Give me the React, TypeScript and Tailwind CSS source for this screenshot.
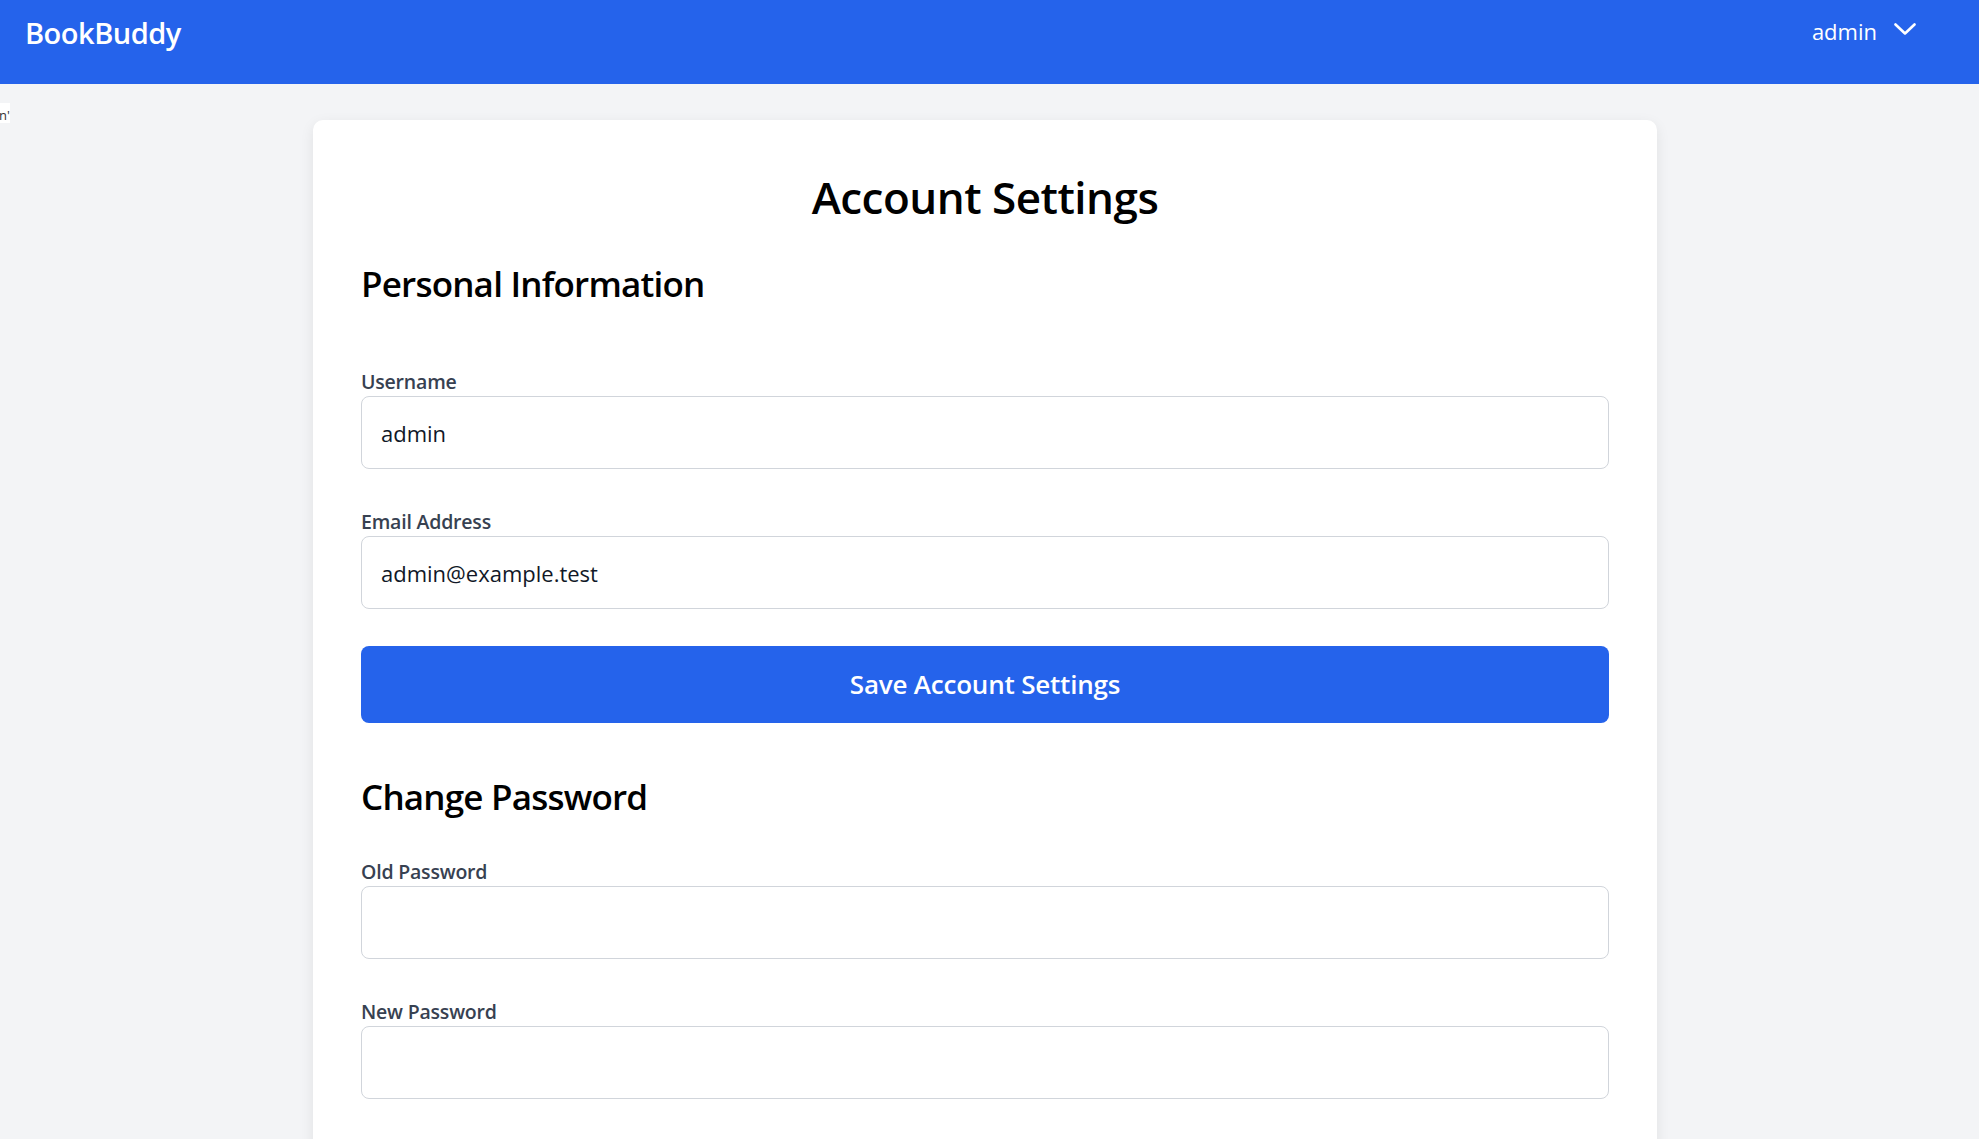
import React from "react";

const Field = ({ label, value, type = "text", gap }: { label: string; value?: string; type?: string; gap: string }) => (
  <div className={`flex flex-col ${gap}`}>
    <label className="text-[19.5px] leading-[28px] font-semibold text-[#374151] tracking-[-0.2px]">{label}</label>
    <input
      type={type}
      defaultValue={value}
      className="h-[73px] w-full rounded-[8px] border border-[#d1d5db] bg-white px-[19px] text-[22px] leading-[30px] text-[#111827] outline-none"
    />
  </div>
);

export default function App(): React.JSX.Element {
  return (
    <div className="min-h-screen bg-[#f3f4f6] font-['Open_Sans',sans-serif]">
      {/* Top bar */}
      <header className="h-[84px] bg-[#2563eb] flex justify-between items-start px-[25px]">
        <h1 className="mt-[13px] text-[29px] leading-[40px] font-semibold text-white tracking-[-0.5px]">BookBuddy</h1>
        <button className="mt-[16px] mr-[38px] flex items-center gap-[17px] text-white">
          <span className="text-[22px] leading-[30px]">admin</span>
          <svg width="22" height="12" viewBox="0 0 22 12" fill="none" className="mt-[-4px]">
            <polyline points="1.5,1.5 11,10.5 20.5,1.5" stroke="white" strokeWidth="2.6" strokeLinecap="round" strokeLinejoin="round" />
          </svg>
        </button>
      </header>

      <main className="flex items-start pt-[19px]">
        {/* broken image remnant */}
        <div className="w-[10px] h-[20px] bg-white overflow-hidden text-[13px] leading-[20px] text-[#333]">
          <span className="block -ml-[1px] mt-[2px]">n'</span>
        </div>

        <section className="ml-[303px] mt-[17px] w-[1344px] rounded-[10px] bg-white shadow-[0_4px_14px_rgba(0,0,0,0.08)] px-[48px] pt-[50px] pb-[160px] text-black">
          <h2 className="text-center text-[44px] leading-[54px] font-semibold tracking-[-0.5px]">Account Settings</h2>

          <h3 className="mt-[37px] text-[35px] leading-[46px] font-semibold tracking-[-0.8px]">Personal Information</h3>
          <Field label="Username" value="admin" gap="mt-[61px]" />
          <Field label="Email Address" value="admin@example.test" type="email" gap="mt-[39px]" />
          <button className="mt-[37px] h-[77px] w-full rounded-[8px] bg-[#2563eb] text-white text-[26px] font-semibold tracking-[-0.2px]">
            Save Account Settings
          </button>

          <h3 className="mt-[51px] text-[35px] leading-[46px] font-semibold tracking-[-0.8px]">Change Password</h3>
          <Field label="Old Password" type="password" gap="mt-[38px]" />
          <Field label="New Password" type="password" gap="mt-[39px]" />
        </section>
      </main>
    </div>
  );
}
